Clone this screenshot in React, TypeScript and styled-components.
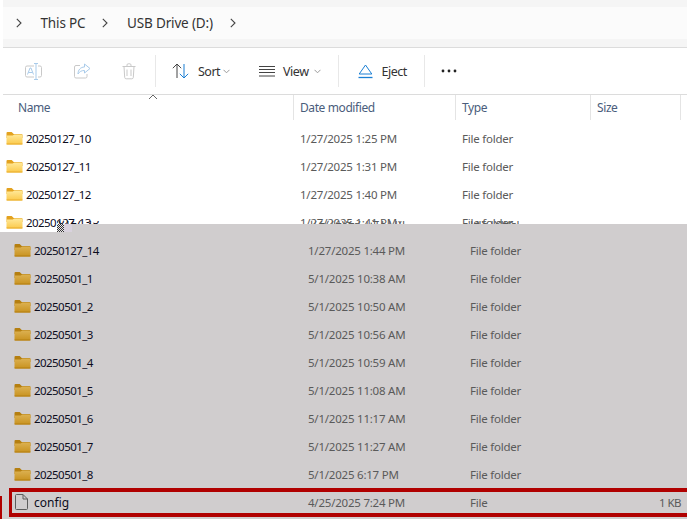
import styled, { createGlobalStyle } from "styled-components";

const Global = createGlobalStyle`
html, body { margin: 0; padding: 0; background: #fff; }
body { font-family: "Noto Sans", "Liberation Sans", sans-serif; font-size: 11.5px; letter-spacing: -0.55px; overflow: hidden; }
`;
const Page = styled.div`
position: relative;
width: 687px;
height: 519px;
overflow: hidden;
background: #fff;
`;
const TopPane = styled.div`
height: 224px;
padding-left: 3px;
background: #fff;
`;
const AddressBar = styled.div`
height: 47px;
box-sizing: border-box;
padding: 7px 0 8px;
background: #f5f5f5;
`;
const Crumbs = styled.div`
height: 32px;
display: flex;
align-items: center;
background: #fbfbfb;
padding-left: 13px;
color: #333;
font-size: 13.5px;
letter-spacing: -0.15px;
`;
const Crumb = styled.span`
margin: 0 17px 0 18.5px;
`;
const Divider = styled.div`
height: 1px;
background: #dcdcdc;
`;
const Toolbar = styled.div`
height: 46px;
display: flex;
align-items: center;
padding-left: 22px;
color: #333;
font-size: 12.5px;
letter-spacing: -0.5px;
`;
const ToolIcon = styled.div<{ $w: number }>`
width: ${(p) => p.$w}px;
display: flex;
align-items: center;
`;
const Sep = styled.div<{ $ml: number }>`
width: 1px;
height: 32px;
background: #e8e8e8;
margin-left: ${(p) => p.$ml}px;
`;
const ToolButton = styled.div<{ $ml: number }>`
display: flex;
align-items: center;
margin-left: ${(p) => p.$ml}px;
`;
const ToolLabel = styled.span<{ $mr: number }>`
margin: 0 ${(p) => p.$mr}px 0 8px;
`;
const Header = styled.div`
position: relative;
height: 25px;
display: grid;
grid-template-columns: 291px 162px 135px 90px;
color: #4a5d7c;
font-size: 12px;
letter-spacing: -0.4px;
margin-bottom: 5px;
`;
const HeadCell = styled.div<{ $first?: boolean }>`
display: flex;
align-items: center;
padding-left: ${(p) => (p.$first ? 15 : 6)}px;
border-right: 1px solid #e4e4e4;
box-sizing: border-box;
`;
const SortCaret = styled.svg`
position: absolute;
left: 145px;
top: -1px;
`;
const Clip = styled.div`
height: 15px;
overflow: hidden;
`;
const Row = styled.div<{ $marked?: boolean }>`
position: relative;
flex-shrink: 0;
height: 28px;
box-sizing: border-box;
padding-bottom: 2px;
display: grid;
grid-template-columns: 291px 162px 135px 84px;
align-items: center;
color: #5a5a5a;
${(p) =>
    p.$marked &&
    `
&::after {
  content: "";
  position: absolute;
  left: -2px;
  right: -20px;
  top: -1px;
  bottom: 0;
  border: solid #b00000;
  border-width: 4px 3px;
}
&::before {
  content: "";
  position: absolute;
  left: -11px;
  top: 7px;
  width: 2px;
  height: 30px;
  background: #b00000;
}
`}
`;
const NameCell = styled.div`
display: flex;
align-items: center;
gap: 3px;
padding-left: 3px;
color: #0c0c1c;
white-space: nowrap;
`;
const FileName = styled.span`
margin-left: 3px;
font-size: 12px;
letter-spacing: 0;
`;
const FileGlyph = styled.svg`
margin-left: 1px;
`;
const Cell = styled.div`
padding-left: 6px;
white-space: nowrap;
letter-spacing: -0.22px;
`;
const SizeCell = styled.div`
text-align: right;
padding-right: 2px;
`;
const GrayPane = styled.div`
display: flow-root;
height: 295px;
padding-left: 11px;
background: #d0cdce;
`;
/* only the feet of the pasted row's text show, on the white just above the seam */
const GhostClip = styled.div`
height: 3px;
margin: -3px 0 13px;
overflow: hidden;
display: flex;
flex-direction: column;
justify-content: flex-end;
`;
const GhostRow = styled.div`
flex-shrink: 0;
margin-bottom: -10px;
`;
const Patch = styled.div`
position: absolute;
left: 0;
top: 209px;
width: 57px;
height: 23px;
padding-left: 3px;
box-sizing: border-box;
background: #fff;
overflow: hidden;
`;
const Noise = styled.div`
position: absolute;
left: 57px;
top: 224px;
width: 15px;
height: 8px;
background:
  linear-gradient(90deg, transparent 7px, #d9d2de 7px),
  repeating-conic-gradient(#333 0 25%, #e8e6e8 0 50%) 0 0 / 2px 2px;
`;

const FolderIcon = ({ dim }: { dim?: boolean }) => {
  const id = dim ? "fd" : "fl";
  return (
    <svg width="17" height="14" viewBox="0 0 17 14">
      <defs>
        <linearGradient id={id} x1="0" y1="0" x2="0" y2="1">
          <stop offset="0" stopColor={dim ? "#dcb152" : "#ffe99a"} />
          <stop offset="1" stopColor={dim ? "#c8921f" : "#fbc94a"} />
        </linearGradient>
      </defs>
      <path d="M0.5 2a1 1 0 0 1 1-1h4.2l2 2H15.5a1 1 0 0 1 1 1v3H0.5z" fill={dim ? "#b57f10" : "#e3a21f"} />
      <path d="M0.5 4.4h6.2l1.6-1H15.5a1 1 0 0 1 1 1V12.5a1 1 0 0 1-1 1H1.5a1 1 0 0 1-1-1z" fill={`url(#${id})`} />
      <path d="M0.5 13h16" stroke={dim ? "#b57f10" : "#e8ab2a"} strokeWidth="1" />
    </svg>
  );
};
const FileIcon = () => (
  <FileGlyph width="13" height="16" viewBox="0 0 13 16" fill="none" stroke="#5c5c5c">
    <path d="M0.5 1.500a1 1 0 0 1 1-1H8l4.500 4.500v9.500a1 1 0 0 1-1 1h-10a1 1 0 0 1-1-1z" />
    <path d="M8 .5V5h4.500" />
  </FileGlyph>
);
const Chevron = () => (
  <svg width="6" height="10" viewBox="0 0 6 10" fill="none" stroke="#444" strokeWidth="1.1">
    <path d="M.8.8 5 5 .8 9.2" />
  </svg>
);
const Down = () => (
  <svg width="7" height="5" viewBox="0 0 7 5" fill="none" stroke="#9a9a9a">
    <path d="M.5.8 3.500 3.800 6.500.8" />
  </svg>
);
const RenameIcon = () => (
  <svg width="17" height="17" viewBox="0 0 17 17" fill="none">
    <path d="M9 3H2A1.500 1.500 0 0 0 .5 4.500v8A1.500 1.500 0 0 0 2 14h7M13 3h2a1.500 1.500 0 0 1 1.500 1.500v8a1.500 1.500 0 0 1-1.500 1.500h-2" stroke="#c9c9c9" />
    <path d="M2.500 11.500 5 5h1l2.500 6.500M3.500 9.500h4M11 .5v16M9 .5h4M9 16.500h4" stroke="#a9cbea" />
  </svg>
);
const ShareIcon = () => (
  <svg width="17" height="16" viewBox="0 0 17 16" fill="none">
    <path d="M6 2.500H2A1.500 1.500 0 0 0 .5 4v9.500A1.500 1.500 0 0 0 2 15h9.500a1.500 1.500 0 0 0 1.500-1.500V11" stroke="#c9c9c9" />
    <path d="M10.500 1 16 5.500 10.500 10V7.500C7.500 7.500 5.500 8.500 4 11c0-4 2.500-7 6.500-7z" stroke="#a9cbea" />
  </svg>
);
const TrashIcon = () => (
  <svg width="14" height="17" viewBox="0 0 14 17" fill="none" stroke="#c9c9c9">
    <path d="M.5 3.500h13M5 3.500V2a1.200 1.200 0 0 1 1.200-1.200h1.600A1.200 1.200 0 0 1 9 2v1.500M2 3.500l.7 11a1.500 1.500 0 0 0 1.500 1.300h5.600a1.500 1.500 0 0 0 1.500-1.300l.7-11M5 6.500v6.500M9 6.500v6.500" />
  </svg>
);
const SortIcon = () => (
  <svg width="18" height="16" viewBox="0 0 18 16" fill="none">
    <path d="M5 15V1M.8 5.200 5 1l4.200 4.200" stroke="#444" />
    <path d="M12 1v14M7.800 10.800 12 15l4.200-4.200" stroke="#1a7fd4" />
  </svg>
);
const ViewIcon = () => (
  <svg width="16" height="11" viewBox="0 0 16 11" stroke="#444">
    <path d="M0 .5h16M0 3.500h16M0 6.500h16M0 10h16" />
  </svg>
);
const EjectIcon = () => (
  <svg width="15" height="15" viewBox="0 0 15 15" fill="none" stroke="#1a7fd4">
    <path d="M7.500 1 13.800 10H1.200z" strokeLinejoin="round" />
    <path d="M.5 13.500h14" strokeWidth="1.300" />
  </svg>
);
const DotsIcon = () => (
  <svg width="16" height="4" viewBox="0 0 16 4" fill="#222">
    <circle cx="2" cy="2" r="1.400" />
    <circle cx="8" cy="2" r="1.400" />
    <circle cx="14" cy="2" r="1.400" />
  </svg>
);

const topRows = [
  ["20250127_10", "1/27/2025 1:25 PM"],
  ["20250127_11", "1/27/2025 1:31 PM"],
  ["20250127_12", "1/27/2025 1:40 PM"],
];
const grayRows = [
  ["20250127_14", "1/27/2025 1:44 PM"],
  ["20250501_1", "5/1/2025 10:38 AM"],
  ["20250501_2", "5/1/2025 10:50 AM"],
  ["20250501_3", "5/1/2025 10:56 AM"],
  ["20250501_4", "5/1/2025 10:59 AM"],
  ["20250501_5", "5/1/2025 11:08 AM"],
  ["20250501_6", "5/1/2025 11:17 AM"],
  ["20250501_7", "5/1/2025 11:27 AM"],
  ["20250501_8", "5/1/2025 6:17 PM"],
];

const FolderRow = ({ name, date, dim }: { name: string; date: string; dim?: boolean }) => (
  <Row>
    <NameCell>
      <FolderIcon dim={dim} />
      {name}
    </NameCell>
    <Cell>{date}</Cell>
    <Cell>File folder</Cell>
    <SizeCell />
  </Row>
);

export default function App() {
  return (
    <Page>
      <Global />
      <TopPane>
        <AddressBar>
          <Crumbs>
            <Chevron />
            <Crumb>This PC</Crumb>
            <Chevron />
            <Crumb>USB Drive (D:)</Crumb>
            <Chevron />
          </Crumbs>
        </AddressBar>
        <Divider />
        <Toolbar>
          <ToolIcon $w={49}><RenameIcon /></ToolIcon>
          <ToolIcon $w={48}><ShareIcon /></ToolIcon>
          <ToolIcon $w={14}><TrashIcon /></ToolIcon>
          <Sep $ml={19} />
          <ToolButton $ml={16}><SortIcon /><ToolLabel $mr={3}>Sort</ToolLabel><Down /></ToolButton>
          <ToolButton $ml={29}><ViewIcon /><ToolLabel $mr={6}>View</ToolLabel><Down /></ToolButton>
          <Sep $ml={17} />
          <ToolButton $ml={19}><EjectIcon /><ToolLabel $mr={6}>Eject</ToolLabel></ToolButton>
          <Sep $ml={11} />
          <ToolButton $ml={16}><DotsIcon /></ToolButton>
        </Toolbar>
        <Divider />
        <Header>
          <SortCaret width="10" height="6" viewBox="0 0 10 6" fill="none" stroke="#666">
            <path d="M1 5 5 1l4 4" />
          </SortCaret>
          <HeadCell $first>Name</HeadCell>
          <HeadCell>Date modified</HeadCell>
          <HeadCell>Type</HeadCell>
          <HeadCell>Size</HeadCell>
        </Header>
        {topRows.map(([name, date]) => (
          <FolderRow key={name} name={name} date={date} />
        ))}
        <Clip>
          <FolderRow name="20250127_13" date="1/27/2025 1:41 PM" />
        </Clip>
      </TopPane>
      <GrayPane>
        <GhostClip>
          <GhostRow>
            <FolderRow dim name="20250127_13" date="1/27/2025 1:41 PM" />
          </GhostRow>
        </GhostClip>
        {grayRows.map(([name, date]) => (
          <FolderRow dim key={name} name={name} date={date} />
        ))}
        <Row $marked>
          <NameCell>
            <FileIcon />
            <FileName>config</FileName>
          </NameCell>
          <Cell>4/25/2025 7:24 PM</Cell>
          <Cell>File</Cell>
          <SizeCell>1 KB</SizeCell>
        </Row>
      </GrayPane>
      <Patch>
        <FolderRow name="20250127_13" date="" />
      </Patch>
      <Noise />
    </Page>
  );
}
